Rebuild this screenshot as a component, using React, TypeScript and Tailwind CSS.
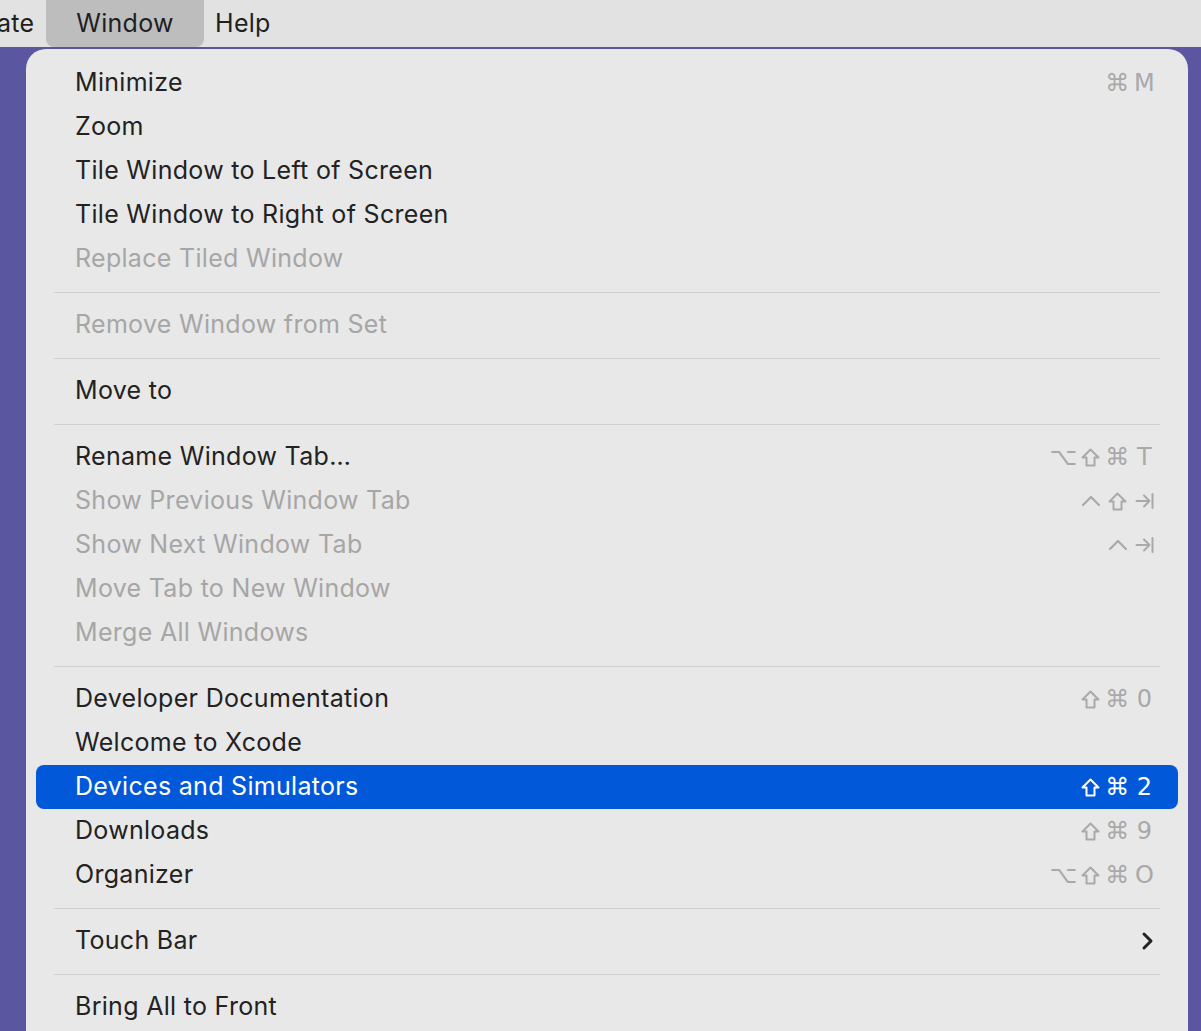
import React from "react";

type Item =
  | { sep: true }
  | { label: string; keys?: string[]; disabled?: boolean; active?: boolean; submenu?: boolean };

const items: Item[] = [
  { label: "Minimize", keys: ["⌘", "M"] },
  { label: "Zoom" },
  { label: "Tile Window to Left of Screen" },
  { label: "Tile Window to Right of Screen" },
  { label: "Replace Tiled Window", disabled: true },
  { sep: true },
  { label: "Remove Window from Set", disabled: true },
  { sep: true },
  { label: "Move to" },
  { sep: true },
  { label: "Rename Window Tab…", keys: ["⌥", "shift", "⌘", "T"] },
  { label: "Show Previous Window Tab", disabled: true, keys: ["ctrl", "shift", "tab"] },
  { label: "Show Next Window Tab", disabled: true, keys: ["ctrl", "tab"] },
  { label: "Move Tab to New Window", disabled: true },
  { label: "Merge All Windows", disabled: true },
  { sep: true },
  { label: "Developer Documentation", keys: ["shift", "⌘", "0"] },
  { label: "Welcome to Xcode" },
  { label: "Devices and Simulators", active: true, keys: ["shift", "⌘", "2"] },
  { label: "Downloads", keys: ["shift", "⌘", "9"] },
  { label: "Organizer", keys: ["⌥", "shift", "⌘", "O"] },
  { sep: true },
  { label: "Touch Bar", submenu: true },
  { sep: true },
  { label: "Bring All to Front" },
];

function Glyph({ k }: { k: string }) {
  if (k === "shift")
    return (
      <svg width="19" height="19" viewBox="0 0 19 19" fill="none" stroke="currentColor" strokeWidth="2" strokeLinejoin="round">
        <path d="M9.5 1.5 L17.5 9.5 H13.5 V17.5 H5.5 V9.5 H1.5 Z" />
      </svg>
    );
  if (k === "ctrl")
    return (
      <svg width="20" height="12" viewBox="0 0 20 12" fill="none" stroke="currentColor" strokeWidth="2.2" strokeLinecap="round" strokeLinejoin="round">
        <path d="M2 10 L10 2 L18 10" />
      </svg>
    );
  if (k === "tab")
    return (
      <svg width="19" height="18" viewBox="0 0 19 18" fill="none" stroke="currentColor" strokeWidth="2" strokeLinecap="round" strokeLinejoin="round">
        <path d="M1.5 9 H14.5 M9 3.5 L14.5 9 L9 14.5 M17.5 2 V16" />
      </svg>
    );
  return <span className="text-[24px] leading-none font-['DejaVu_Sans',sans-serif]">{k}</span>;
}

function Keys({ keys, active }: { keys: string[]; active?: boolean }) {
  return (
    <div className={`flex items-center ${active ? "text-white" : "text-[#a9a9a9]"}`}>
      {keys.map((k, i) => (
        <span key={i} className="inline-flex h-[24px] w-[27px] items-center justify-center">
          <Glyph k={k} />
        </span>
      ))}
    </div>
  );
}

export default function App() {
  return (
    <div className="h-[1031px] w-[1201px] overflow-hidden bg-[#5b56a0] font-['Inter','Noto_Sans',sans-serif] tracking-[0.3px]">
      {/* menu bar */}
      <div className="flex h-[47px] items-stretch bg-[#e2e2e2] text-[25px] text-[#1f1f1f]">
        <div className="flex w-[46px] items-center overflow-hidden">
          <span className="-ml-[3px]">ate</span>
        </div>
        <div className="flex w-[158px] items-center justify-center rounded-b-[8px] bg-[#bdbdbd]">
          Window
        </div>
        <div className="flex items-center pl-[11px]">Help</div>
      </div>

      {/* dropdown */}
      <div className="mt-[2px] ml-[26px] w-[1162px] rounded-t-[20px] bg-[#e8e8e8] px-[10px] pt-[12px] pb-[20px]">
        {items.map((it, i) =>
          "sep" in it ? (
            <div key={i} className="flex h-[22px] items-center px-[18px]">
              <div className="h-px w-full bg-[#cfcfcf]" />
            </div>
          ) : (
            <div
              key={i}
              className={`flex h-[44px] items-center justify-between rounded-[8px] pl-[39px] pr-[20px] text-[25px] ${
                it.active
                  ? "bg-[#0159d9] text-white"
                  : it.disabled
                  ? "text-[#a6a6a6]"
                  : "text-[#222222]"
              }`}
            >
              <span>{it.label}</span>
              {it.keys && <Keys keys={it.keys} active={it.active} />}
              {it.submenu && (
                <svg width="14" height="20" viewBox="0 0 14 20" fill="none" stroke="#222" strokeWidth="3" strokeLinecap="round" strokeLinejoin="round" className="mr-[3px]">
                  <path d="M3 3 L10 10 L3 17" />
                </svg>
              )}
            </div>
          )
        )}
      </div>
    </div>
  );
}
